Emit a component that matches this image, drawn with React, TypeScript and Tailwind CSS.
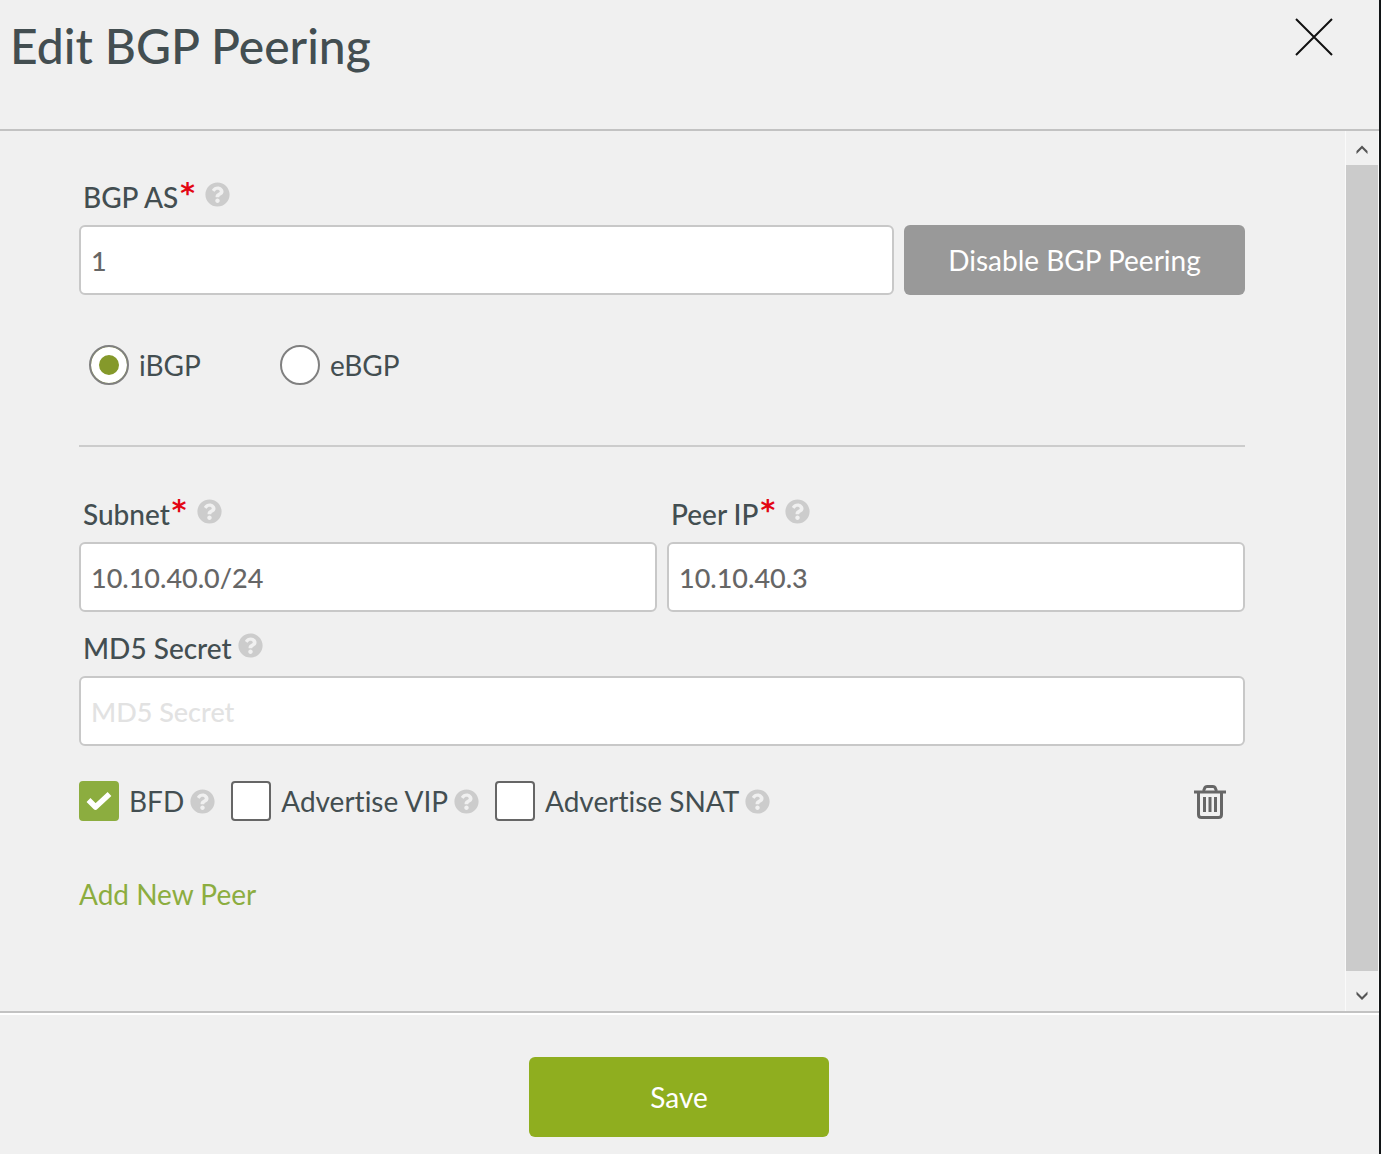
import { FaQuestionCircle } from "react-icons/fa";
import type { InputHTMLAttributes } from "react";

function Help({ topic }: { topic: string }) {
  return (
    <button type="button" aria-label={`Help: ${topic}`} className="shrink-0 text-[#cccccc]">
      <FaQuestionCircle className="size-[25px]" />
    </button>
  );
}

type FieldProps = InputHTMLAttributes<HTMLInputElement> & {
  id: string;
  label: string;
};

function Field({ id, label, required, ...rest }: FieldProps) {
  return (
    <div className="min-w-0 flex-1">
      <div className="mb-2 flex h-10 items-center gap-1.5 pl-1">
        <label htmlFor={id} className="flex items-center text-[28px] leading-10 font-medium">
          {label}
          {required && (
            <span className="mr-1 mb-1.5 ml-0.5 font-['DejaVu_Sans',sans-serif] text-[28px] leading-10 font-bold text-[#e30613]">
              *
            </span>
          )}
        </label>
        <span className="mb-1.5 flex">
          <Help topic={label} />
        </span>
      </div>
      <input
        id={id}
        type="text"
        required={required}
        className="h-[70px] w-full rounded-md border-2 border-[#c8c8c8] bg-white px-2.5 text-[27px] font-medium text-[#666666] outline-none placeholder:text-[#e2e2e2]"
        {...rest}
      />
    </div>
  );
}

function Radio({ id, label, checked }: { id: string; label: string; checked?: boolean }) {
  return (
    <div className="flex items-center gap-2.5">
      <input
        id={id}
        type="radio"
        name="bgp-type"
        defaultChecked={checked}
        className="size-10 appearance-none rounded-full border-2 border-[#808080] bg-white checked:bg-[#85992b] checked:shadow-[inset_0_0_0_8px_white]"
      />
      <label htmlFor={id} className="text-[28px] leading-10">
        {label}
      </label>
    </div>
  );
}

function Check({ id, label, checked }: { id: string; label: string; checked?: boolean }) {
  return (
    <div className="flex items-center">
      <span className="relative flex size-10">
        <input
          id={id}
          type="checkbox"
          defaultChecked={checked}
          className="peer size-10 appearance-none rounded-sm border-2 border-[#666666] bg-white checked:border-[#8cad3f] checked:bg-[#8cad3f]"
        />
        <svg
          viewBox="0 0 40 40"
          className="pointer-events-none absolute inset-0 hidden size-10 text-white peer-checked:block"
          fill="none"
          stroke="currentColor"
          strokeWidth="5.5"
          strokeLinejoin="round"
        >
          <path d="M9.500 19L16.500 26L30.500 13" />
        </svg>
      </span>
      <label htmlFor={id} className="mr-1.5 ml-2.5 text-[28px] leading-10">
        {label}
      </label>
      <Help topic={label} />
    </div>
  );
}

function Chevron({ down }: { down?: boolean }) {
  return (
    <svg viewBox="0 0 12 10" className="h-2.5 w-3" fill="#555555">
      <path d={down ? "M0.500 0.500L6 6L11.500 0.500V3.500L6 9L0.500 3.500Z" : "M0.500 9L6 3.500L11.500 9V6L6 0.500L0.500 6Z"} />
    </svg>
  );
}

export default function App() {
  return (
    <div className="min-h-screen bg-[#111416] pr-0.5 font-['Lato',sans-serif] text-[#434e51] [font-variant-ligatures:none]">
      <form className="flex min-h-screen flex-col bg-[#f0f0f0]" onSubmit={(e) => e.preventDefault()}>
        <header className="flex items-start justify-between border-b-2 border-[#c2c2c2] pt-4 pr-[46px] pb-[53px] pl-2.5">
          <h1 className="text-[48px] leading-[60px] font-medium">Edit BGP Peering</h1>
          <button type="button" aria-label="Close" className="mt-0.5 text-[#111111]">
            <svg viewBox="0 0 38 38" className="size-[38px]" fill="none" stroke="currentColor" strokeWidth="2">
              <path d="M1 1L37 37M37 1L1 37" />
            </svg>
          </button>
        </header>

        <div className="flex flex-1">
          <main className="flex-1 pt-[46px] pr-[100px] pl-[79px]">
            <div className="flex items-end gap-2.5">
              <Field id="bgp-as" label="BGP AS" required defaultValue="1" />
              <button type="button" className="h-[70px] w-[341px] rounded-md bg-[#999999] text-[28px] text-white">
                Disable BGP Peering
              </button>
            </div>

            <div className="mt-[50px] flex gap-[79px] pl-2.5">
              <Radio id="ibgp" label="iBGP" checked />
              <Radio id="ebgp" label="eBGP" />
            </div>

            <hr className="mt-15 border-t-2 border-[#cccccc]" />

            <div className="mt-[47px] flex gap-2.5">
              <Field id="subnet" label="Subnet" required defaultValue="10.10.40.0/24" />
              <Field id="peer-ip" label="Peer IP" required defaultValue="10.10.40.3" />
            </div>
            <div className="mt-4 flex">
              <Field id="md5" label="MD5 Secret" placeholder="MD5 Secret" />
            </div>

            <div className="mt-[35px] flex items-center gap-4">
              <Check id="bfd" label="BFD" checked />
              <Check id="vip" label="Advertise VIP" />
              <Check id="snat" label="Advertise SNAT" />
              <button type="button" aria-label="Delete peer" className="mt-0.5 mr-[18px] ml-auto text-[#666666]">
                <svg viewBox="0 0 34 36" className="h-9 w-[34px]" fill="none" stroke="currentColor" strokeWidth="3">
                  <path d="M1 8H33" />
                  <path d="M10.500 7L12 3.500Q12.500 2.500 14 2.500H20Q21.500 2.500 22 3.500L23.500 7" />
                  <path d="M5.500 8V30.500Q5.500 33.500 8.500 33.500H25.500Q28.500 33.500 28.500 30.500V8" />
                  <path d="M11.500 13V28M17 13V28M22.500 13V28" />
                </svg>
              </button>
            </div>

            <a href="#add-peer" className="mt-[53px] inline-block text-[28px] leading-10 text-[#8cad3f]">
              Add New Peer
            </a>
          </main>

          <div className="flex w-[34px] flex-col border-x border-[#fafafa]">
            <button type="button" aria-label="Scroll up" className="flex h-[34px] items-center justify-center pt-1">
              <Chevron />
            </button>
            <div className="flex-1 bg-[#cbcbcb]" />
            <button type="button" aria-label="Scroll down" className="flex h-10 items-center justify-center pt-2.5">
              <Chevron down />
            </button>
          </div>
        </div>

        <footer className="border-t-2 border-[#c2c2c2]">
          <div className="flex justify-center border-t-2 border-white pt-[42px] pr-[21px] pb-[17px]">
            <button type="submit" className="h-20 w-[300px] rounded-md bg-[#8fae1f] text-[28px] text-white">
              Save
            </button>
          </div>
        </footer>
      </form>
    </div>
  );
}
